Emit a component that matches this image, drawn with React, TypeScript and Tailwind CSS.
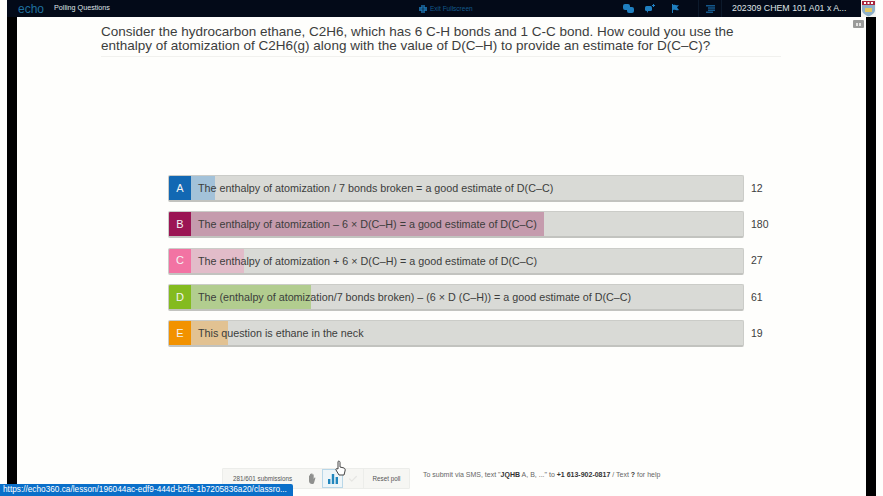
import { Check } from "lucide-react";

const font = { fontFamily: "'Liberation Sans', Arial, sans-serif" };

const rows = [
  { l: "A", c: "bg-[#1268b3]", f: "bg-[#a3c2d9]", w: 24, n: "12", t: "The enthalpy of atomization / 7 bonds broken = a good estimate of D(C–C)" },
  { l: "B", c: "bg-[#9b1554]", f: "bg-[#c59bad]", w: 353, n: "180", t: "The enthalpy of atomization – 6 × D(C–H) = a good estimate of D(C–C)" },
  { l: "C", c: "bg-[#f273a3]", f: "bg-[#e2bcc9]", w: 53, n: "27", t: "The enthalpy of atomization + 6 × D(C–H) = a good estimate of D(C–C)" },
  { l: "D", c: "bg-[#84bb1f]", f: "bg-[#b2cd8f]", w: 120, n: "61", t: "The (enthalpy of atomization/7 bonds broken) – (6 × D (C–H)) = a good estimate of D(C–C)" },
  { l: "E", c: "bg-[#f29200]", f: "bg-[#e2c292]", w: 37, n: "19", t: "This question is ethane in the neck" },
];

function Crest() {
  return (
    <svg width="15" height="17" viewBox="0 0 15 17" className="shrink-0">
      <rect width="15" height="17" fill="#f4f4f0" />
      <path d="M1 1h13v9c0 3-3 5-6.500 6.500C4 15 1 13 1 10z" fill="#8fb0c8" />
      <rect x="1" y="1" width="13" height="4" fill="#a8233a" />
      <rect x="3" y="2" width="2" height="2" fill="#fff" />
      <rect x="6.500" y="2" width="2" height="2" fill="#fff" />
      <rect x="10" y="2" width="2" height="2" fill="#fff" />
      <rect x="4" y="8" width="7" height="4" fill="#e2c760" />
    </svg>
  );
}

export default function App() {
  return (
    <div className="relative h-[496px] w-[883px] overflow-hidden bg-[#fefefc] px-[7px] text-[#3c3d3c]" style={font}>
      <div className="flex h-full flex-col">
        <header className="flex h-[17px] shrink-0 items-center whitespace-nowrap bg-[#030a18] text-[#dfe3e6]">
          <span className="ml-[11px] w-[36px] shrink-0 text-[12px] leading-none text-[#1f6f9e]">echo</span>
          <span className="w-[57px] shrink-0 text-[7.200px]">Polling Questions</span>
          <div className="ml-[308px] flex w-[54px] shrink-0 items-center gap-[3px] text-[6.500px] text-[#135a8c]">
            <svg width="8" height="8" viewBox="0 0 8 8" fill="none" stroke="#1f7fc0" strokeWidth="1.300" className="shrink-0">
              <path d="M0 3h3V0M5 0v3h3M0 5h3v3M8 5H5v3" />
            </svg>
            Exit Fullscreen
          </div>
          <div className="ml-[150px] flex shrink-0 items-center text-[#1f7fc0]">
            <svg width="11" height="9" viewBox="0 0 11 9" fill="currentColor"><rect width="7" height="6" rx="2" /><rect x="4" y="3" width="7" height="6" rx="2" /></svg>
            <svg className="ml-[11px]" width="11" height="9" viewBox="0 0 11 9" fill="currentColor"><rect y="2" width="7" height="5" rx="1.500" /><path d="M8 0h1v1h1v1H9v1H8V2H7V1h1z" /><path d="M1 6h2v3z" /></svg>
            <svg className="ml-[16px]" width="7" height="9" viewBox="0 0 7 9" fill="currentColor"><path d="M0 0h1v9H0zM1 1c2-1 3 1 6 0L5 3.500 7 6C4 7 3 5 1 6z" /></svg>
            <div className="ml-[19px] h-[17px] w-px bg-[#0c1a2c]" />
            <svg className="ml-[7px]" width="9" height="8" viewBox="0 0 9 8" fill="#14578a"><path d="M0 0h9v1.500H0zM2 2.200h7v1.500H2zM2 4.400h7v1.500H2zM0 6.500h7V8H0z" /></svg>
            <div className="ml-[6px] h-[17px] w-px bg-[#0c1a2c]" />
          </div>
          <span className="ml-[10px] w-[129px] shrink-0 text-[8.800px]">202309 CHEM 101 A01 x A...</span>
          <Crest />
        </header>
        <div className="flex min-h-0 flex-1">
          <div className="w-[10px] shrink-0 bg-black" />
          <main className="relative flex min-w-0 flex-1 flex-col">
            <div className="ml-[84px] mr-[85px] mt-[8px] h-[32px] border-b border-[#f1f1ee] text-[13.500px] leading-[14px]">
              <p className="whitespace-nowrap">Consider the hydrocarbon ethane, C2H6, which has 6 C-H bonds and 1 C-C bond. How could you use the</p>
              <p className="whitespace-nowrap">enthalpy of atomization of C2H6(g) along with the value of D(C–H) to provide an estimate for D(C–C)?</p>
            </div>
            <div className="ml-[151px] mt-[118px] flex flex-col gap-[9.300px]">
              {rows.map((r) => (
                <div key={r.l} className="flex items-center">
                  <div className="relative flex h-[27px] w-[576px] overflow-hidden rounded-[2px] border border-b-2 border-[#cbccc8] border-b-[#c2c3bf] bg-[#d9dad6]">
                    <div className={`flex w-[22px] shrink-0 items-center justify-center text-[11px] text-[#f4f4f4] ${r.c}`}>{r.l}</div>
                    <div className="relative min-w-0 flex-1">
                      <div className={`absolute inset-y-0 left-0 ${r.f}`} style={{ width: r.w }} />
                      <div className="relative pl-[7px] text-[10.750px] leading-[25px] whitespace-nowrap">{r.t}</div>
                    </div>
                  </div>
                  <span className="ml-[7px] text-[10.500px]">{r.n}</span>
                </div>
              ))}
            </div>
            <div className="ml-[205px] mt-[121px] flex items-start">
              <div className="flex h-[21px] w-[188px] items-center rounded-[1px] border border-[#ecedea] bg-[#f6f6f3] text-[6.300px] text-[#555]">
                <span className="w-[78px] pl-[10px] whitespace-nowrap">281/601 submissions</span>
                <span className="flex w-[21px] items-center justify-center">
                  <svg width="8" height="11" viewBox="0 0 8 11" fill="#8f908e"><path d="M1 3c0-1 1-1 1 0V1.500c0-1 1.200-1 1.200 0V1c0-1 1.300-1 1.300 0v1c0-1 1.200-1 1.200 0v4l.6-1c.5-.8 1.400-.3 1 .5L6 10c-.5 1-1 1-2 1-1.500 0-3-1-3-3z" /></svg>
                </span>
                <span className="flex h-[19px] w-[21px] items-center justify-center border border-[#b9d7e8] bg-[#eef5f8] text-[#2186bd]">
                  <svg width="10" height="10" viewBox="0 0 10 10" fill="currentColor"><path d="M0 5h2.400v5H0zM3.800 0h2.400v10H3.800zM7.600 3h2.400v7H7.600z" /></svg>
                </span>
                <span className="flex w-[20px] items-center justify-center text-[#e6e6e3]"><Check size={10} strokeWidth={3} /></span>
                <span className="flex-1 border-l border-[#ecedea] text-center leading-[19px]">Reset poll</span>
              </div>
              <p className="ml-[13px] mt-[2px] text-[7px] whitespace-nowrap text-[#666]">
                To submit via SMS, text "<b className="text-[#333]">JQHB</b> A, B, ..." to <b className="text-[#333]">+1 613-902-0817</b> / Text <b className="text-[#333]">?</b> for help
              </p>
            </div>
            <div className="absolute right-[2px] top-[3px] flex h-[8px] w-[11px] items-center justify-center gap-px rounded-[1px] bg-[#9a9b99]">
              <span className="h-[3px] w-[2px] bg-[#e4e4e2]" />
              <span className="h-[3px] w-[2px] bg-[#e4e4e2]" />
            </div>
          </main>
          <div className="w-[10px] shrink-0 bg-black" />
        </div>
      </div>
      <div className="absolute bottom-0 left-0 flex h-[12px] w-[293px] items-center rounded-tr-[2px] bg-[#0a6fc9] pl-[3px] text-[8.250px] whitespace-nowrap text-white">
        https://echo360.ca/lesson/196044ac-edf9-444d-b2fe-1b7205836a20/classro...
      </div>
      <svg className="absolute left-[335px] top-[460px]" width="11" height="16" viewBox="0 0 11 16">
        <path d="M3 1.500c1-1 2 0 2 1V7l4 1c1 .5 1.500 1.500 1 3l-1 4H4L1 10c-.5-1 .5-2 2-1z" fill="#fff" stroke="#444" strokeWidth="1" />
      </svg>
    </div>
  );
}
